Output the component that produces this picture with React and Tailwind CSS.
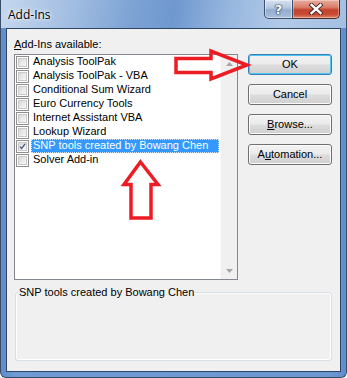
import React from "react";

const ADD_INS = [
  { name: "Analysis ToolPak", checked: false },
  { name: "Analysis ToolPak - VBA", checked: false },
  { name: "Conditional Sum Wizard", checked: false },
  { name: "Euro Currency Tools", checked: false },
  { name: "Internet Assistant VBA", checked: false },
  { name: "Lookup Wizard", checked: false },
  { name: "SNP tools created by Bowang Chen", checked: true, selected: true },
  { name: "Solver Add-in", checked: false },
];

const BODY_FONT = "font-['Liberation_Sans',Arial,sans-serif] text-[11px] leading-[13px]";

function CheckBox({ checked }) {
  return (
    <div className="w-[13px] h-[13px] ml-[1px] shrink-0 border border-[#8e8f8f] bg-white p-[1px]">
      <div className="w-full h-full bg-[linear-gradient(135deg,#d6d6d6_0%,#ececec_60%,#f8f8f8_100%)] border border-[#c9c9c9] flex items-center justify-center">
        {checked && (
          <svg width="9" height="9" viewBox="0 0 9 9">
            <path d="M1.2 4.6 L3.4 7 L7.8 1.2" fill="none" stroke="#4b5a86" strokeWidth="1.7" />
          </svg>
        )}
      </div>
    </div>
  );
}

function WinButton({ children, isDefault }) {
  return (
    <button
      className={
        "w-[84px] h-[21px] rounded-[3px] border flex items-center justify-center text-black bg-[linear-gradient(#f2f2f2_0%,#ebebeb_48%,#dddddd_52%,#cfcfcf_100%)] " +
        BODY_FONT +
        (isDefault
          ? " border-[#3c7fb1] shadow-[inset_0_0_0_1px_#4cc4f4]"
          : " border-[#707070] shadow-[inset_0_0_0_1px_#fbfbfb]")
      }
    >
      {children}
    </button>
  );
}

function ScrollArrow({ up }) {
  return (
    <div className="h-[17px] flex items-center justify-center">
      <svg width="7" height="4" viewBox="0 0 7 4">
        <path d={up ? "M0 4 L3.5 0 L7 4 Z" : "M0 0 L7 0 L3.5 4 Z"} fill="#a6a6a6" />
      </svg>
    </div>
  );
}

export default function App() {
  return (
    <div className="relative w-[347px] h-[378px] overflow-hidden bg-white">
      <div className="flex flex-col w-full h-full border-x border-b border-[#3b4d66] rounded-b-[6px] bg-[linear-gradient(90deg,#5f8dcb_0%,#6f9ad3_4%,#6c97d1_96%,#5f8dcb_100%)]">
        {/* title bar */}
        <div className="h-[28px] shrink-0 flex items-start justify-between bg-[linear-gradient(100deg,#c4d7ee_0%,#a7c1e4_18%,#7da3d4_38%,#6f98cf_50%,#98b7df_66%,#b2cae8_82%,#a3bfe3_100%)]">
          <span className="ml-[7px] mt-[7px] font-['Open_Sans','Liberation_Sans',sans-serif] text-[12px] leading-[16px] text-black [text-shadow:0_0_6px_#ffffff,0_0_3px_#ffffff]">
            Add-Ins
          </span>
          <div className="flex mr-[6px]">
            <div className="w-[29px] h-[19px] border border-t-0 border-[#3d4f6a] rounded-bl-[5px] bg-[linear-gradient(#d6e1f0_0%,#b4c6df_45%,#94acce_55%,#a9bfdc_100%)] shadow-[inset_0_0_0_1px_rgba(255,255,255,0.45)] flex items-center justify-center">
              <span className="font-['DejaVu_Sans',sans-serif] font-bold text-[13px] leading-[13px] text-white [text-shadow:0_0_1px_#27354a,0_0_1px_#27354a,0_0_2px_#27354a]">
                ?
              </span>
            </div>
            <div className="w-[47px] h-[19px] border border-t-0 border-l-0 border-[#4a2a27] rounded-br-[5px] bg-[linear-gradient(#e7ac9c_0%,#d9806b_40%,#c2432e_55%,#c94a33_80%,#de8a6d_100%)] shadow-[inset_0_0_0_1px_rgba(255,255,255,0.35)] flex items-center justify-center">
              <svg width="14" height="12" viewBox="0 0 14 12">
                <path d="M2.5 2 L11.5 10 M11.5 2 L2.5 10" stroke="#3b1f1c" strokeWidth="4.2" strokeLinecap="square" />
                <path d="M2.5 2 L11.5 10 M11.5 2 L2.5 10" stroke="#ffffff" strokeWidth="2.4" strokeLinecap="square" />
              </svg>
            </div>
          </div>
        </div>

        {/* client area */}
        <div className="mx-[5px] h-[344px] shrink-0 border border-[#2f4565] bg-[#f0f0f0] flex flex-col pl-[7px] pr-[7px] pt-[9px]">
          <div className={BODY_FONT + " text-black"}>
            <span className="underline">A</span>dd-Ins available:
          </div>

          <div className="flex mt-[3px]">
            <div className="w-[224px] h-[226px] border border-[#828790] bg-white flex">
              <div className="flex-1 flex flex-col">
                {ADD_INS.map((item) => (
                  <div key={item.name} className="h-[14px] flex items-center">
                    <CheckBox checked={item.checked} />
                    <span
                      className={
                        "ml-[2px] mr-[1px] flex-1 h-[14px] pl-[2px] whitespace-nowrap " +
                        BODY_FONT +
                        (item.selected
                          ? " bg-[#3399ff] text-white outline outline-1 outline-dotted outline-[#cfe4ff] -outline-offset-1"
                          : " text-black")
                      }
                    >
                      {item.name}
                    </span>
                  </div>
                ))}
              </div>
              <div className="w-[17px] bg-[#f0f0f0] border-l border-[#f8f8f8] flex flex-col justify-between">
                <ScrollArrow up />
                <ScrollArrow />
              </div>
            </div>

            <div className="ml-[10px] flex flex-col gap-[9px]">
              <WinButton isDefault>OK</WinButton>
              <WinButton>Cancel</WinButton>
              <WinButton>
                <span className="underline">B</span>rowse...
              </WinButton>
              <WinButton>
                A<span className="underline">u</span>tomation...
              </WinButton>
            </div>
          </div>

          <div className="relative ml-[1px] mt-[12px] w-[317px] h-[69px] border border-[#d5dfe5] rounded-[3px] shadow-[inset_0_0_0_1px_#ffffff]">
            <span className={"absolute -top-[7px] left-[2px] px-[1px] bg-[#f0f0f0] text-black " + BODY_FONT}>
              SNP tools created by Bowang Chen
            </span>
          </div>
        </div>
      </div>

      {/* red annotation arrows */}
      <svg className="absolute inset-0 pointer-events-none" width="347" height="378" viewBox="0 0 347 378">
        <polygon
          points="176,58.5 211,58.5 211,51 247,65 211,79 211,72.5 176,72.5"
          fill="none"
          stroke="#ed1c24"
          strokeWidth="3.5"
          strokeLinejoin="miter"
        />
        <polygon
          points="140.5,162 158,184.5 151,184.5 151,218 131,218 131,184.5 124,184.5"
          fill="none"
          stroke="#ed1c24"
          strokeWidth="3.5"
          strokeLinejoin="miter"
        />
      </svg>
    </div>
  );
}
